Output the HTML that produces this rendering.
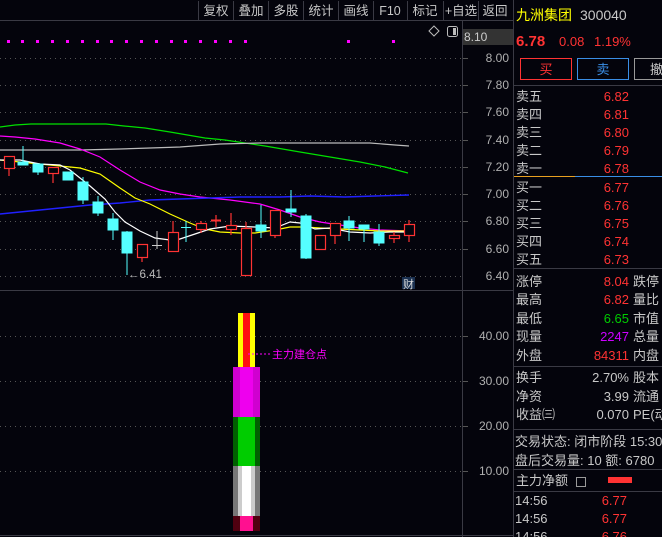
<!DOCTYPE html>
<html><head><meta charset="utf-8"><style>
html,body{margin:0;padding:0;background:#04040c;width:662px;height:537px;overflow:hidden}
svg{display:block}
text{font-family:"Liberation Sans","Noto Sans CJK SC",sans-serif}
</style></head><body>
<svg width="662" height="537" viewBox="0 0 662 537" xmlns="http://www.w3.org/2000/svg">
<rect width="662" height="537" fill="#04040c"/>
<!-- toolbar -->
<g stroke="#3a3a44" stroke-width="1">
<line x1="0" y1="20.5" x2="513" y2="20.5"/>
<line x1="198.5" y1="1" x2="198.5" y2="20"/><line x1="233.5" y1="1" x2="233.5" y2="20"/><line x1="268.5" y1="1" x2="268.5" y2="20"/><line x1="303.5" y1="1" x2="303.5" y2="20"/><line x1="338.5" y1="1" x2="338.5" y2="20"/><line x1="373.5" y1="1" x2="373.5" y2="20"/><line x1="407.5" y1="1" x2="407.5" y2="20"/><line x1="443.5" y1="1" x2="443.5" y2="20"/><line x1="478.5" y1="1" x2="478.5" y2="20"/>
</g>
<g fill="#c8c8c8" font-size="12.5" text-anchor="middle">
<text x="216" y="15">复权</text><text x="251" y="15">叠加</text><text x="286" y="15">多股</text><text x="321" y="15">统计</text><text x="356" y="15">画线</text><text x="390" y="15">F10</text><text x="425" y="15">标记</text><text x="461" y="15">+自选</text><text x="495" y="15">返回</text>
</g>
<!-- magenta dots -->
<g fill="#ff00ff">
<rect x="7" y="40" width="3" height="3"/><rect x="21" y="40" width="3" height="3"/><rect x="36" y="40" width="3" height="3"/><rect x="51" y="40" width="3" height="3"/><rect x="66" y="40" width="3" height="3"/><rect x="81" y="40" width="3" height="3"/><rect x="96" y="40" width="3" height="3"/><rect x="110" y="40" width="3" height="3"/><rect x="125" y="40" width="3" height="3"/><rect x="140" y="40" width="3" height="3"/><rect x="155" y="40" width="3" height="3"/><rect x="170" y="40" width="3" height="3"/><rect x="184" y="40" width="3" height="3"/><rect x="199" y="40" width="3" height="3"/><rect x="214" y="40" width="3" height="3"/><rect x="229" y="40" width="3" height="3"/><rect x="244" y="40" width="3" height="3"/><rect x="347" y="40" width="3" height="3"/><rect x="392" y="40" width="3" height="3"/>
</g>
<!-- icons -->
<path d="M434 26 L439 31 L434 36 L429 31 Z" fill="none" stroke="#bbb"/>
<rect x="447.5" y="26.5" width="10" height="10" rx="2" fill="none" stroke="#bbb"/><rect x="453" y="28" width="3" height="7" fill="#bbb"/>
<!-- gridlines -->
<g stroke="#555" stroke-dasharray="1 4">
<line x1="0" y1="58.5" x2="462" y2="58.5"/><line x1="0" y1="85.5" x2="462" y2="85.5"/><line x1="0" y1="112.5" x2="462" y2="112.5"/><line x1="0" y1="140.5" x2="462" y2="140.5"/><line x1="0" y1="167.5" x2="462" y2="167.5"/><line x1="0" y1="194.5" x2="462" y2="194.5"/><line x1="0" y1="221.5" x2="462" y2="221.5"/><line x1="0" y1="249.5" x2="462" y2="249.5"/><line x1="0" y1="276.5" x2="462" y2="276.5"/>
<line x1="0" y1="336.5" x2="462" y2="336.5"/><line x1="0" y1="381.5" x2="462" y2="381.5"/><line x1="0" y1="426.5" x2="462" y2="426.5"/><line x1="0" y1="471.5" x2="462" y2="471.5"/>
</g>
<!-- MA lines -->
<polyline fill="none" stroke="#00e000" stroke-width="1.2" points="0,127 15,125 31,124 60,124 106,124 124,126 145,128 170,132 205,138 225,140 265,146 300,152 330,157 360,162 385,167 408,173"/>
<polyline fill="none" stroke="#bbbbbb" stroke-width="1.2" points="0,150 40,150 80,150 120,149 150,148 180,147 220,144 260,143 300,143 343,143 370,143 395,145 409,146"/>
<polyline fill="none" stroke="#ff00ff" stroke-width="1.2" points="0,136 15,137 35,139 60,143 80,149 100,157 120,170 140,182 160,190 180,194 200,197 230,200 260,204 280,210 300,217 320,222 340,225 360,228 380,230 410,231"/>
<polyline fill="none" stroke="#2020ff" stroke-width="1.4" points="0,214 30,211 60,208 90,205 120,203 150,200 180,199 210,198 240,197 280,197 310,196 345,197 375,196 409,195"/>
<polyline fill="none" stroke="#ffff00" stroke-width="1.2" points="0,160 20,162 40,164 60,166 80,168 100,174 120,188 135,198 150,204 170,214 190,223 205,229 220,232 240,233 255,233 275,230 290,227 305,227 320,228 340,229 360,230 380,231 409,231"/>
<polyline fill="none" stroke="#ffffff" stroke-width="1.2" points="0,160 20,160 40,164 60,165 70,170 80,178 90,186 105,199 115,212 125,222 140,231 155,238 170,240 180,239 195,234 210,229 230,226 255,227 275,228 290,222 300,223 315,229 330,228 350,232 370,233 390,232 409,232"/>
<!-- candles -->
<g stroke="#ff3333" fill="none" stroke-width="1.2">
<line x1="9" y1="156" x2="9" y2="176"/><rect x="4.5" y="156.5" width="10" height="12" fill="#04040c"/>
<line x1="53" y1="167" x2="53" y2="183"/><rect x="48.5" y="167.5" width="10" height="6" fill="#04040c"/>
<line x1="142" y1="244" x2="142" y2="262"/><rect x="137.5" y="244.5" width="10" height="13" fill="#04040c"/>
<line x1="173" y1="221" x2="173" y2="251"/><rect x="168.5" y="232.5" width="10" height="19" fill="#04040c"/>
<line x1="201" y1="221" x2="201" y2="233"/><rect x="196.5" y="223.5" width="10" height="6" fill="#04040c"/>
<line x1="216" y1="215" x2="216" y2="227"/><line x1="211" y1="220.5" x2="221" y2="220.5" stroke-width="2"/>
<line x1="231" y1="213" x2="231" y2="235"/><rect x="226.5" y="225.5" width="10" height="4" fill="#04040c"/>
<line x1="246" y1="222" x2="246" y2="275"/><rect x="241.5" y="228.5" width="10" height="47" fill="#04040c"/>
<line x1="275" y1="210" x2="275" y2="238"/><rect x="270.5" y="210.5" width="10" height="25" fill="#04040c"/>
<rect x="315.5" y="235.5" width="10" height="14" fill="#04040c"/>
<line x1="335" y1="223" x2="335" y2="244"/><rect x="330.5" y="223.5" width="10" height="12" fill="#04040c"/>
<line x1="394" y1="232" x2="394" y2="243"/><rect x="389.5" y="235.5" width="10" height="3" fill="#04040c"/>
<line x1="409" y1="220" x2="409" y2="242"/><rect x="404.5" y="224.5" width="10" height="11" fill="#04040c"/>
</g>
<g fill="#55ffff" stroke="#55ffff" stroke-width="1">
<line x1="23" y1="146" x2="23" y2="165"/><rect x="18" y="162" width="10" height="3"/>
<line x1="38" y1="164" x2="38" y2="175"/><rect x="33" y="164" width="10" height="8"/>
<rect x="63" y="172" width="10" height="8"/>
<line x1="83" y1="177" x2="83" y2="204"/><rect x="78" y="182" width="10" height="18"/>
<line x1="98" y1="196" x2="98" y2="216"/><rect x="93" y="202" width="10" height="11"/>
<line x1="113" y1="213" x2="113" y2="240"/><rect x="108" y="219" width="10" height="11"/>
<line x1="127" y1="231" x2="127" y2="275"/><rect x="122" y="232" width="10" height="21"/>
<line x1="186" y1="221" x2="186" y2="242"/><line x1="181" y1="227.5" x2="191" y2="227.5"/>
<line x1="261" y1="205" x2="261" y2="238"/><rect x="256" y="225" width="10" height="6"/>
<line x1="291" y1="190" x2="291" y2="217"/><rect x="286" y="209" width="10" height="3"/>
<line x1="306" y1="214" x2="306" y2="259"/><rect x="301" y="216" width="10" height="42"/>
<line x1="349" y1="216" x2="349" y2="241"/><rect x="344" y="221" width="10" height="7"/>
<line x1="364" y1="225" x2="364" y2="242"/><rect x="359" y="225" width="10" height="4"/>
<line x1="379" y1="224" x2="379" y2="246"/><rect x="374" y="232" width="10" height="11"/>
</g>
<g stroke="#cccccc"><line x1="157" y1="231" x2="157" y2="249"/><line x1="152" y1="245.5" x2="162" y2="245.5"/></g>
<text x="128" y="278" fill="#bbb" font-size="11.5">←6.41</text>
<rect x="402" y="277" width="13" height="12" fill="#1a3050"/><text x="403" y="288" fill="#ddd" font-size="11">财</text>
<!-- divider -->
<line x1="0" y1="290.5" x2="513" y2="290.5" stroke="#3a3a44"/>
<!-- sub chart bar -->
<rect x="238" y="313" width="17" height="54" fill="#ffff00"/><rect x="243" y="313" width="7" height="54" fill="#ff1010"/>
<rect x="233" y="367" width="27" height="50" fill="#d000d0"/><rect x="240" y="367" width="13" height="50" fill="#ee00ee"/>
<rect x="233" y="417" width="27" height="49" fill="#006000"/><rect x="238" y="417" width="17" height="49" fill="#00cc00"/>
<rect x="233" y="466" width="27" height="50" fill="#777"/><rect x="238" y="466" width="17" height="50" fill="#ccc"/><rect x="242" y="466" width="9" height="50" fill="#fff"/>
<rect x="233" y="516" width="27" height="15" fill="#500010"/><rect x="240" y="516" width="13" height="15" fill="#ff1090"/>
<line x1="248" y1="354" x2="272" y2="354" stroke="#ff00ff" stroke-dasharray="2 2"/>
<text x="272" y="358" fill="#ff00ff" font-size="11">主力建仓点</text>
<line x1="0" y1="535.5" x2="513" y2="535.5" stroke="#3a3a44"/>
<!-- axis -->
<line x1="462.5" y1="21" x2="462.5" y2="537" stroke="#3a3a44"/>
<rect x="463" y="29" width="50" height="16" fill="#333"/>
<text x="464" y="41" fill="#ccc" font-size="12">8.10</text>
<g fill="#b0b0b0" font-size="12" text-anchor="end">
<text x="509" y="62">8.00</text><text x="509" y="89">7.80</text><text x="509" y="116">7.60</text><text x="509" y="144">7.40</text><text x="509" y="171">7.20</text><text x="509" y="198">7.00</text><text x="509" y="225">6.80</text><text x="509" y="253">6.60</text><text x="509" y="280">6.40</text>
<text x="509" y="340">40.00</text><text x="509" y="385">30.00</text><text x="509" y="430">20.00</text><text x="509" y="475">10.00</text>
</g>
<g stroke="#555"><line x1="463" y1="58.5" x2="468" y2="58.5"/><line x1="463" y1="85.5" x2="468" y2="85.5"/><line x1="463" y1="112.5" x2="468" y2="112.5"/><line x1="463" y1="140.5" x2="468" y2="140.5"/><line x1="463" y1="167.5" x2="468" y2="167.5"/><line x1="463" y1="194.5" x2="468" y2="194.5"/><line x1="463" y1="221.5" x2="468" y2="221.5"/><line x1="463" y1="249.5" x2="468" y2="249.5"/><line x1="463" y1="336.5" x2="468" y2="336.5"/><line x1="463" y1="381.5" x2="468" y2="381.5"/><line x1="463" y1="426.5" x2="468" y2="426.5"/><line x1="463" y1="471.5" x2="468" y2="471.5"/></g>
<!-- right panel -->
<line x1="513.5" y1="0" x2="513.5" y2="537" stroke="#3a3a44"/>
<text x="516" y="20" fill="#ffff00" font-size="14">九洲集团</text><text x="580" y="20" fill="#c8c8c8" font-size="14">300040</text>
<text x="516" y="46" fill="#ff3333" font-size="15" font-weight="bold">6.78</text>
<text x="559" y="46" fill="#ff3333" font-size="13">0.08</text><text x="594" y="46" fill="#ff3333" font-size="13">1.19%</text>
<rect x="520.5" y="58.5" width="51" height="21" fill="none" stroke="#ff3333"/><text x="546" y="74" fill="#ff3333" font-size="13" text-anchor="middle">买</text>
<rect x="577.5" y="58.5" width="51" height="21" fill="none" stroke="#3a8ee6"/><text x="603" y="74" fill="#3a8ee6" font-size="13" text-anchor="middle">卖</text>
<rect x="634.5" y="58.5" width="40" height="21" fill="none" stroke="#999"/><text x="650" y="74" fill="#ccc" font-size="13">撤</text>
<line x1="514" y1="85.5" x2="662" y2="85.5" stroke="#3a3a44"/>
<g font-size="13" fill="#c8c8c8">
<text x="516" y="101">卖五</text><text x="516" y="119">卖四</text><text x="516" y="137">卖三</text><text x="516" y="155">卖二</text><text x="516" y="173">卖一</text>
<text x="516" y="192">买一</text><text x="516" y="210">买二</text><text x="516" y="228">买三</text><text x="516" y="246">买四</text><text x="516" y="264">买五</text>
</g>
<g font-size="13" fill="#ff3333" text-anchor="end">
<text x="629" y="101">6.82</text><text x="629" y="119">6.81</text><text x="629" y="137">6.80</text><text x="629" y="155">6.79</text><text x="629" y="173">6.78</text>
<text x="629" y="192">6.77</text><text x="629" y="210">6.76</text><text x="629" y="228">6.75</text><text x="629" y="246">6.74</text><text x="629" y="264">6.73</text>
</g>
<line x1="514" y1="176.5" x2="575" y2="176.5" stroke="#e8a020"/><line x1="575" y1="176.5" x2="662" y2="176.5" stroke="#3a8ee6"/>
<line x1="514" y1="268.5" x2="662" y2="268.5" stroke="#3a3a44"/>
<g font-size="13" fill="#c8c8c8">
<text x="516" y="286">涨停</text><text x="516" y="304">最高</text><text x="516" y="323">最低</text><text x="516" y="341">现量</text><text x="516" y="360">外盘</text>
<text x="633" y="286">跌停</text><text x="633" y="304">量比</text><text x="633" y="323">市值</text><text x="633" y="341">总量</text><text x="633" y="360">内盘</text>
<text x="516" y="382">换手</text><text x="516" y="401">净资</text><text x="516" y="419">收益㈢</text>
<text x="633" y="382">股本</text><text x="633" y="401">流通</text><text x="633" y="419">PE(动</text>
<text x="515" y="446">交易状态: 闭市阶段 15:30</text><text x="515" y="465">盘后交易量: 10  额: 6780</text>
<text x="516" y="485">主力净额</text>
<text x="515" y="505">14:56</text><text x="515" y="523">14:56</text><text x="515" y="541">14:56</text>
</g>
<g font-size="13" text-anchor="end">
<text x="629" y="286" fill="#ff3333">8.04</text><text x="629" y="304" fill="#ff3333">6.82</text><text x="629" y="323" fill="#00cc00">6.65</text><text x="629" y="341" fill="#cc00ff">2247</text><text x="629" y="360" fill="#ff3333">84311</text>
<text x="629" y="382" fill="#c8c8c8">2.70%</text><text x="629" y="401" fill="#c8c8c8">3.99</text><text x="629" y="419" fill="#c8c8c8">0.070</text>
<text x="627" y="505" fill="#ff3333">6.77</text><text x="627" y="523" fill="#ff3333">6.77</text><text x="627" y="541" fill="#ff3333">6.76</text>
</g>
<rect x="576.5" y="477.5" width="9" height="9" fill="none" stroke="#999"/>
<rect x="608" y="477" width="24" height="6" fill="#ff3333"/>
<line x1="514" y1="366.5" x2="662" y2="366.5" stroke="#3a3a44"/>
<line x1="514" y1="429.5" x2="662" y2="429.5" stroke="#3a3a44"/>
<line x1="514" y1="469.5" x2="662" y2="469.5" stroke="#3a3a44"/>
<line x1="514" y1="491.5" x2="662" y2="491.5" stroke="#3a3a44"/>
</svg>
</body></html>
